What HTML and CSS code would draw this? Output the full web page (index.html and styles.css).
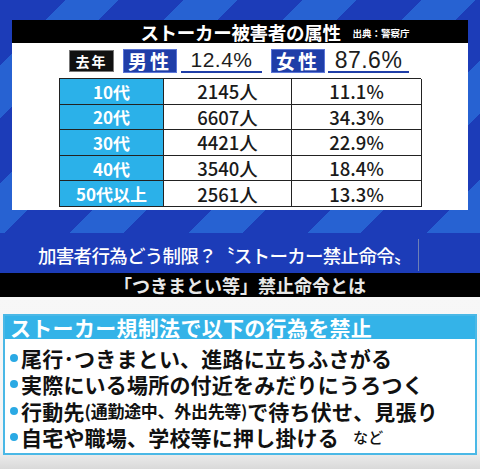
FILE: index.html
```html
<!DOCTYPE html>
<html lang="ja">
<head>
    <meta charset="UTF-8">
    <meta name="viewport" content="width=device-width, initial-scale=1.0">
    <title>ストーカー被害者の属性</title>
    <link rel="stylesheet" href="styles.css">
</head>
<body>
    <div class="screen">
        <div class="stage">
            <div class="card">
                <div class="card-header">
                    <h2>ストーカー被害者の属性</h2>
                    <span class="source">出典：警察庁</span>
                </div>
                <div class="ratio-row">
                    <span class="tag-year">去年</span>
                    <span class="tag-sex">男性</span>
                    <span class="ratio">12.4%</span>
                    <span class="tag-sex">女性</span>
                    <span class="ratio ratio-wide">87.6%</span>
                </div>
                <div class="age-table">
                    <div class="age">10代</div><div class="num">2145人</div><div class="num">11.1%</div>
                    <div class="age">20代</div><div class="num">6607人</div><div class="num">34.3%</div>
                    <div class="age">30代</div><div class="num">4421人</div><div class="num">22.9%</div>
                    <div class="age">40代</div><div class="num">3540人</div><div class="num">18.4%</div>
                    <div class="age">50代以上</div><div class="num">2561人</div><div class="num">13.3%</div>
                </div>
            </div>
        </div>

        <div class="headline">
            <span>加害者行為どう制限？〝ストーカー禁止命令〟</span>
        </div>
        <div class="subbar">「つきまとい等」禁止命令とは</div>

        <div class="lower">
            <div class="rule-box">
                <div class="rule-title">ストーカー規制法で以下の行為を禁止</div>
                <ul class="rule-list">
                    <li>尾行･つきまとい、進路に立ちふさがる</li>
                    <li>実際にいる場所の付近をみだりにうろつく</li>
                    <li>行動先<small>(通勤途中、外出先等)</small>で待ち伏せ、見張り</li>
                    <li>自宅や職場、学校等に押し掛ける<span class="etc">など</span></li>
                </ul>
            </div>
        </div>
    </div>
</body>
</html>
```

FILE: styles.css
```css
:root {
    --navy: #1c3cb8;
    --stripe: #2762d2;
    --cyan: #2bb1e9;
    --pill: #1f3ea8;
    --ink: #1d1d1d;
}

* {
    margin: 0;
    padding: 0;
    box-sizing: border-box;
}

body {
    font-family: "Noto Sans CJK JP", "Noto Sans", sans-serif;
    background: #1c3cb8;
    color: var(--ink);
}

.screen {
    width: 480px;
    height: 469px;
    overflow: hidden;
}

.stage {
    height: 233px;
    padding: 20px 12px 0;
    background:
        repeating-linear-gradient(135deg,
            transparent 0 46px,
            var(--stripe) 46px 84px),
        var(--navy);
}

.card {
    background: #fff;
    height: 190px;
}

.card-header {
    background: #000;
    height: 23px;
    display: flex;
    align-items: center;
    justify-content: center;
    gap: 12px;
    padding-left: 70px;
    color: #fff;
}

.card-header h2 {
    font-size: 18.5px;
    font-weight: 700;
    letter-spacing: -0.3px;
}

.source {
    font-size: 9.5px;
    font-weight: 700;
    margin-top: 3px;
}

.ratio-row {
    height: 35px;
    display: flex;
    align-items: center;
    padding-left: 57px;
}

.tag-year {
    background: #111;
    color: #fff;
    font-size: 14px;
    font-weight: 700;
    width: 45px;
    height: 22px;
    line-height: 21px;
    text-align: center;
    letter-spacing: 2px;
    border: 1px solid #777;
}

.tag-sex {
    background: var(--pill);
    color: #fff;
    font-size: 19px;
    font-weight: 700;
    width: 54px;
    height: 24px;
    line-height: 24px;
    text-align: center;
    letter-spacing: 3px;
    margin-left: 9px;
    box-shadow: inset 0 0 0 1px #5b76d8;
}

.ratio {
    font-family: "Liberation Sans", "Noto Sans", sans-serif;
    font-size: 21px;
    font-weight: 400;
    width: 81px;
    height: 24px;
    line-height: 22px;
    text-align: center;
    margin-left: 4px;
    border-bottom: 2px solid var(--pill);
    letter-spacing: 0.5px;
}

.ratio-wide {
    font-size: 23px;
    margin-left: 3px;
}

.age-table {
    display: grid;
    grid-template-columns: 104px 128px 130px;
    grid-auto-rows: 25.6px;
    margin-left: 47px;
    width: 362px;
    border-left: 1.5px solid #222;
    border-top: 1.5px solid #222;
}

.age-table div {
    border-right: 1.5px solid #222;
    border-bottom: 1.5px solid #222;
    display: flex;
    align-items: center;
    justify-content: center;
}

.age {
    background: var(--cyan);
    color: #fff;
    font-size: 17px;
    font-weight: 700;
}

.num {
    font-size: 18.5px;
    font-weight: 500;
    color: #1a1a1a;
}

.headline {
    height: 40px;
    background: var(--navy);
    display: flex;
    align-items: center;
    padding: 4px 0 0 38px;
}

.headline span {
    color: #fff;
    font-size: 18.5px;
    font-weight: 500;
    letter-spacing: -0.7px;
    padding-right: 6px;
    border-right: 1px solid #6d7fb6;
    line-height: 32px;
}

.subbar {
    background: #000;
    color: #e8e8e8;
    height: 24px;
    line-height: 24px;
    text-align: center;
    font-size: 18px;
    font-weight: 700;
}

.lower {
    height: 172px;
    padding: 17px 3px 0;
    background: linear-gradient(#f7f7f7 0, #f4f4f4 150px, #d9d9d9 172px);
}

.rule-box {
    background: #fff;
    border: 2px solid #4ab8e6;
    height: 141px;
}

.rule-title {
    background: #34b3e8;
    color: #fff;
    font-size: 21px;
    font-weight: 700;
    height: 23px;
    line-height: 23px;
    padding-left: 5px;
    letter-spacing: 0.3px;
}

.rule-list {
    list-style: none;
    padding: 6px 0 0 5px;
}

.rule-list li {
    font-size: 21px;
    font-weight: 700;
    line-height: 26px;
    height: 26.3px;
    display: flex;
    align-items: center;
    color: #111;
    white-space: nowrap;
    letter-spacing: 0.2px;
}

.rule-list li::before {
    content: "";
    width: 8px;
    height: 8px;
    border-radius: 50%;
    background: #2aa9e4;
    margin-right: 3px;
    flex-shrink: 0;
}

.rule-list small {
    font-size: 17px;
    font-weight: 700;
    letter-spacing: -0.3px;
}

.etc {
    font-size: 15px;
    font-weight: 500;
    margin-left: 14px;
}
```
